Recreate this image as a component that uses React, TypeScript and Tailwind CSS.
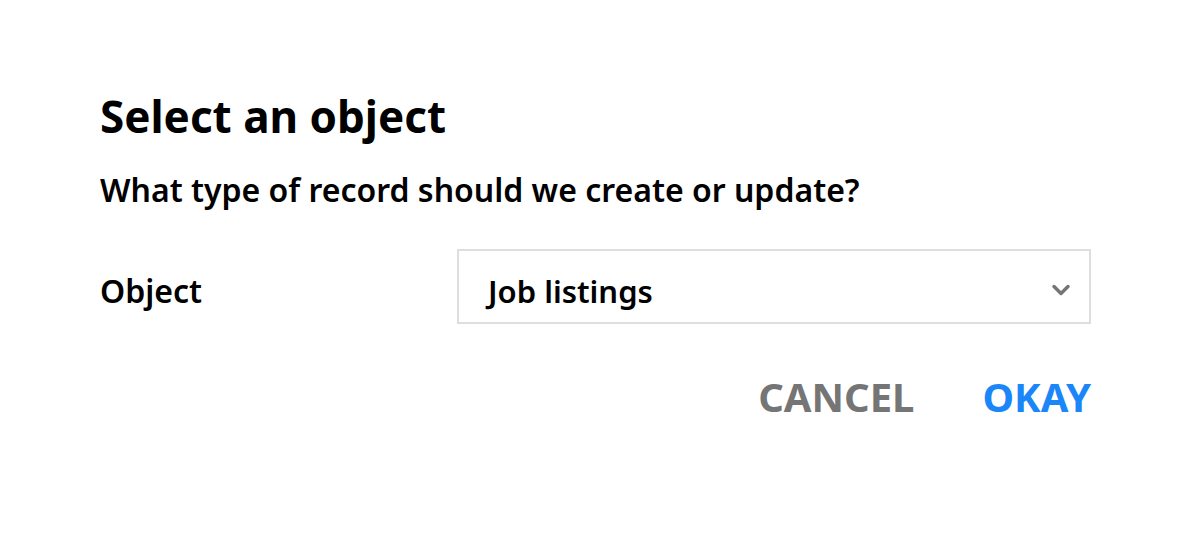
import { ChevronDown } from 'lucide-react';

export default function App() {
  return (
    <div className="w-[1192px] h-[540px] bg-white" style={{ fontFamily: '"Noto Sans", sans-serif' }}>
      <div className="w-[991px] ml-[100px] pt-[88px]">
        <h1 className="text-[44px] leading-[56px] font-bold text-black">Select an object</h1>
        <p className="mt-[26px] text-[32px] leading-[40px] font-semibold text-black">
          What type of record should we create or update?
        </p>

        <div className="mt-[39px] flex items-center">
          <label className="w-[357px] pt-[8px] text-[32px] leading-[40px] font-semibold text-black">Object</label>
          <div className="flex-1 h-[75px] border-2 border-[#dedede] flex items-center justify-between pl-[29px] pr-[14px]">
            <span className="pt-[8px] text-[31px] leading-[40px] font-semibold text-black">Job listings</span>
            <ChevronDown className="mt-[6px] w-[28px] h-[28px] text-[#757575]" strokeWidth={3} />
          </div>
        </div>

        <div className="mt-[47px] flex justify-end gap-[68px]">
          <button className="text-[40px] leading-[52px] font-bold uppercase text-[#757575]">Cancel</button>
          <button className="text-[40px] leading-[52px] font-bold uppercase text-[#1a86f7]">Okay</button>
        </div>
      </div>
    </div>
  );
}
